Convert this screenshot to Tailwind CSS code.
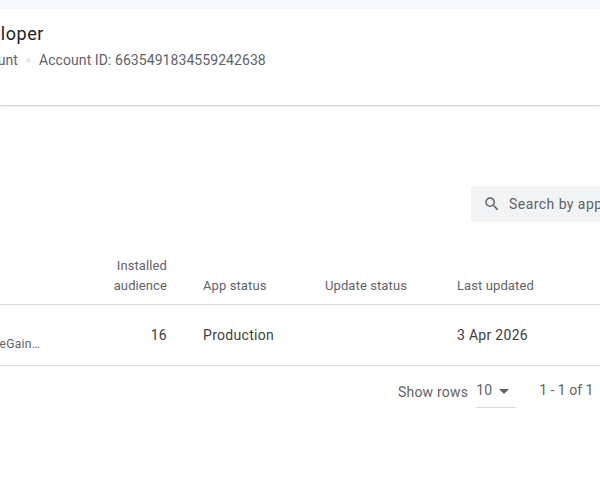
<!DOCTYPE html>
<html lang="en">

<head>
    <meta charset="UTF-8">
    <meta name="viewport" content="width=device-width, initial-scale=1.0">
    <title>All apps</title>
    <script src="https://cdn.jsdelivr.net/npm/@tailwindcss/browser@4"></script>
</head>

<body class="bg-white overflow-hidden font-['Roboto',sans-serif] w-[600px] h-[485px]">

    <div class="h-[9px] bg-[#f6f8fc]"></div>

    <!-- Account header -->
    <div class="relative h-[96px] bg-white shadow-[0_1px_2px_rgba(60,64,67,0.3)] overflow-hidden">
        <div class="whitespace-nowrap ml-[-100px] pt-[13px]">
            <h1 class="text-[18px] leading-[24px] text-[#202124] tracking-[0.55px] w-[144px] text-right">Developer</h1>
            <div class="flex items-center mt-[4px] text-[14px] leading-[20px] text-[#5f6368] tracking-[0.07px]">
                <span class="w-[118px] text-right">Account</span>
                <span class="w-[5px] h-[5px] rounded-full bg-[#e8eaed] ml-[8px] mr-[8px]"></span>
                <span>Account ID: 6635491834559242638</span>
            </div>
        </div>
    </div>

    <!-- Search -->
    <div class="h-[142px] pt-[81px] overflow-hidden">
        <div class="ml-[471px] w-[200px] h-[36px] flex items-center bg-[#f1f3f4] rounded-[4px] pl-[12px] text-[14px] text-[#5f6368] tracking-[0.45px] whitespace-nowrap">
            <svg class="w-[18px] h-[18px] mr-[8px] shrink-0" viewBox="0 0 24 24" fill="#5f6368"><path d="M15.5 14h-.79l-.28-.27A6.47 6.47 0 0 0 16 9.5 6.5 6.5 0 1 0 9.5 16c1.61 0 3.09-.59 4.23-1.57l.27.28v.79l5 4.99L20.49 19l-4.99-5zm-6 0C7.01 14 5 11.99 5 9.5S7.01 5 9.5 5 14 7.01 14 9.5 11.99 14 9.5 14z"/></svg>
            <span>Search by app</span>
        </div>
    </div>

    <!-- Table -->
    <div class="grid grid-cols-[167px_36px_122px_132px_143px] w-[600px]">
        <div class="col-span-5 grid grid-cols-subgrid items-end h-[58px] pb-[8px] border-b border-[#dadce0] text-[13px] leading-[20px] text-[#5f6368] tracking-[0.1px]">
            <div class="text-right">Installed<br>audience</div>
            <div></div>
            <div>App status</div>
            <div>Update status</div>
            <div>Last updated</div>
        </div>
        <div class="col-span-5 grid grid-cols-subgrid h-[61px] border-b border-[#dadce0] text-[14px] leading-[20px] text-[#3c4043] tracking-[0.3px]">
            <div class="relative flex justify-end pt-[20px]">
                <span>16</span>
                <span class="absolute right-[127px] top-[31px] text-[12px] leading-[16px] text-[#5f6368] whitespace-nowrap">eGain…</span>
            </div>
            <div></div>
            <div class="pt-[20px]">Production</div>
            <div></div>
            <div class="pt-[20px]">3 Apr 2026</div>
        </div>
    </div>

    <!-- Pagination -->
    <div class="flex items-start h-[42px] text-[14px] leading-[20px] text-[#5f6368] tracking-[0.2px]">
        <span class="ml-[398px] mt-[16px]">Show rows</span>
        <div class="ml-[8px] w-[40px] h-[42px] border-b border-[#dadce0] flex items-start pt-[14px]">
            <span>10</span>
            <span class="ml-[7px] mt-[9px] w-0 h-0 border-x-[5px] border-x-transparent border-t-[5px] border-t-[#5f6368]"></span>
        </div>
        <span class="ml-[23px] mt-[14px] tracking-normal">1 - 1 of 1</span>
    </div>

</body>

</html>
